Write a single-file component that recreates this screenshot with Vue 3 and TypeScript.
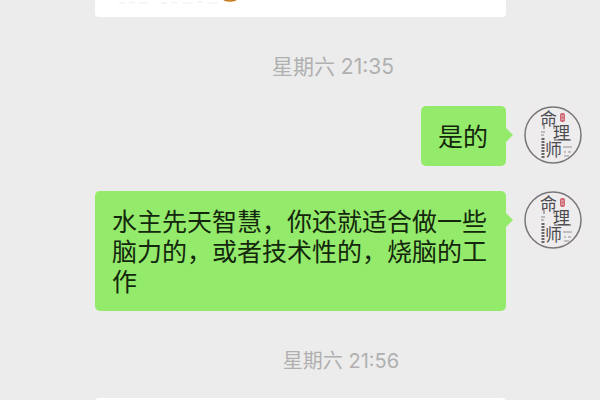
<script setup lang="ts">
interface Message {
  id: number
  text: string
}

const messages: Message[] = [
  { id: 1, text: '是的' },
  { id: 2, text: '水主先天智慧，你还就适合做一些脑力的，或者技术性的，烧脑的工作' },
]
</script>

<template>
  <main class="chat">
    <div class="incoming first">
      <svg class="tail" viewBox="0 0 130 5" aria-hidden="true">
        <path d="M4 3h6M14 2l6 1M24 3h8M46 3h6M56 2l6 1M68 3h10M82 2h6M92 3h10" fill="none" stroke="#f6f6f6" stroke-width="2" />
        <ellipse cx="115" cy="-5" rx="10" ry="7" fill="#e9a84c" />
        <path d="M109 0Q115 2 121 0" fill="none" stroke="#b97528" stroke-width="1" />
      </svg>
    </div>
    <time class="stamp early">星期六 21:35</time>
    <section class="thread">
      <article v-for="message in messages" :key="message.id" class="row">
        <p class="bubble">{{ message.text }}</p>
        <svg class="avatar" viewBox="0 0 58 58" role="img" aria-label="命理师">
          <rect width="58" height="58" fill="#eeebec" />
          <circle cx="29" cy="29" r="28" fill="#efecee" stroke="#77777a" stroke-width="1.5" />
          <g class="seal-text">
            <text x="16" y="19" font-size="17">命</text>
            <text x="29" y="33" font-size="17">理</text>
            <text x="21" y="50" font-size="17">师</text>
          </g>
          <rect x="36" y="7" width="5" height="9" rx="2" fill="#cf6472" />
          <path d="M37 10h3M37 13h3" stroke="#ecc5ca" stroke-width="1" />
          <path d="M20 18v5M30 18v5" stroke="#66666a" stroke-width="1" />
          <path d="M17 26h4M17 29h3" stroke="#88888a" stroke-width="1" />
          <path d="M19 32v20" stroke="#68686b" stroke-width="3" stroke-dasharray="2 1" />
          <path d="M30 34h17" stroke="#55555a" stroke-width="1" />
          <path d="M39 41h9M40 46h2M44 46h3M40 50h5" stroke="#909092" stroke-width="1" />
        </svg>
      </article>
    </section>
    <time class="stamp late">星期六 21:56</time>
    <div class="incoming next"></div>
  </main>
</template>

<style>
body {
  margin: 0;
  background: #ececec;
}
</style>

<style scoped>
.chat {
  display: flex;
  flex-direction: column;
  height: 100vh;
  overflow: hidden;
  background: #ececec;
  font-family: Inter, "Noto Sans CJK SC", sans-serif;
}

.incoming {
  flex: none;
  margin: 0 94px 0 95px;
  background: #fff;
}

.first {
  height: 17px;
  border-radius: 0 0 4px 4px;
}

.next {
  height: 60px;
  border-radius: 4px 4px 0 0;
}

.tail {
  display: block;
  width: 130px;
  height: 5px;
  margin-left: 20px;
}

.stamp {
  flex: none;
  color: #b0b0b0;
  line-height: 30px;
  text-align: center;
}

.early {
  margin: 35px 0 24px;
  padding-left: 66px;
  font-size: 21px;
}

.late {
  margin: 35px 0 22px;
  padding-left: 82px;
  font-size: 20px;
}

.thread {
  display: flex;
  flex-direction: column;
  gap: 25px;
  padding: 0 18px 0 95px;
}

.row {
  display: flex;
  justify-content: flex-end;
  align-items: flex-start;
  gap: 18px;
}

.bubble {
  position: relative;
  margin: 0;
  padding: 14px 18px 16px 17px;
  border-radius: 5px;
  background: #93ea6b;
  color: #13270c;
  font-family: "Noto Sans CJK SC", sans-serif;
  font-size: 25px;
  line-height: 30px;
}

.bubble::after {
  content: "";
  position: absolute;
  top: 22px;
  left: 100%;
  border: 7px solid transparent;
  border-right-width: 0;
  border-left-color: #93ea6b;
}

.avatar {
  flex: none;
  width: 58px;
  height: 58px;
}

.seal-text {
  fill: #4c4c50;
  font-family: "Noto Sans CJK SC", sans-serif;
}
</style>
